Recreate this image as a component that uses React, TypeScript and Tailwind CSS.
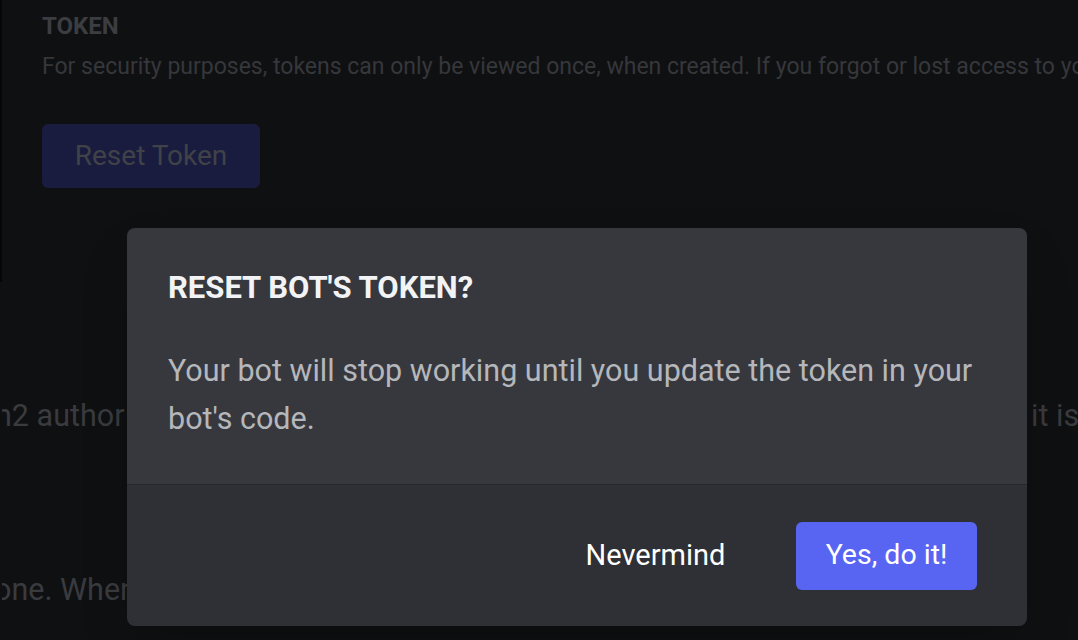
import React from "react";

const ResetTokenModal: React.FC = () => {
  return (
    <div className="absolute left-[127px] top-[228px] w-[900px] rounded-[8px] overflow-hidden shadow-2xl">
      {/* Header */}
      <div className="bg-[#37383e] pl-[41px] pr-[40px] pt-[41px] pb-[40px] h-[256px]">
        <h2 className="text-[31px] leading-[38px] font-bold text-[#f2f3f5]">RESET BOT'S TOKEN?</h2>
        <p className="mt-[40px] text-[30.5px] leading-[48px] text-[#b5b7bb]">
          Your bot will stop working until you update the token in your bot's code.
        </p>
      </div>

      <div className="h-px bg-[#26272b]" />

      {/* Footer */}
      <div className="bg-[#2f3035] h-[141px] flex items-center justify-end gap-[41px] pr-[50px]">
        <button className="w-[199px] h-[68px] flex items-center justify-center text-[29px] text-white">
          Nevermind
        </button>
        <button className="w-[181px] h-[68px] rounded-[6px] bg-[#5865f2] flex items-center justify-center text-[28.5px] text-white">
          Yes, do it!
        </button>
      </div>
    </div>
  );
};

const App: React.FC = () => {
  return (
    <div className="relative w-[1078px] h-[640px] overflow-hidden bg-[#0f1012] font-['Roboto',sans-serif]">
      <div className="flex">
        {/* sidebar edge */}
        <div className="w-[2px] h-[282px] bg-[#060607] shrink-0" />

        {/* Page content behind the overlay */}
        <div className="flex-1 min-w-0 whitespace-nowrap overflow-hidden">
          <div className="pl-[40px] pt-[11px]">
            <h3 className="text-[24px] leading-[30px] font-bold text-[#3c3d41]">TOKEN</h3>
            <p className="mt-[11px] text-[23px] leading-[30px] text-[#36373b]">
              For security purposes, tokens can only be viewed once, when created. If you forgot or lost access to your token, please regenerate a new one.
            </p>
            <button className="mt-[42px] w-[218px] h-[64px] rounded-[6px] bg-[#191c3f] text-[28px] text-[#404248] flex items-center justify-center">
              Reset Token
            </button>
          </div>

          <div className="mt-[208px] flex text-[30.5px] leading-[40px] text-[#3a3b3f]">
            <span className="-ml-[7px]">n2 author</span>
            <span className="ml-auto w-[47px] overflow-hidden">it is public</span>
          </div>

          <div className="mt-[134px] text-[30.5px] leading-[40px] text-[#3a3b3f]">
            <span className="-ml-[8px] inline-block">one. When</span>
          </div>
        </div>
      </div>

      <ResetTokenModal />
    </div>
  );
};

export default App;
